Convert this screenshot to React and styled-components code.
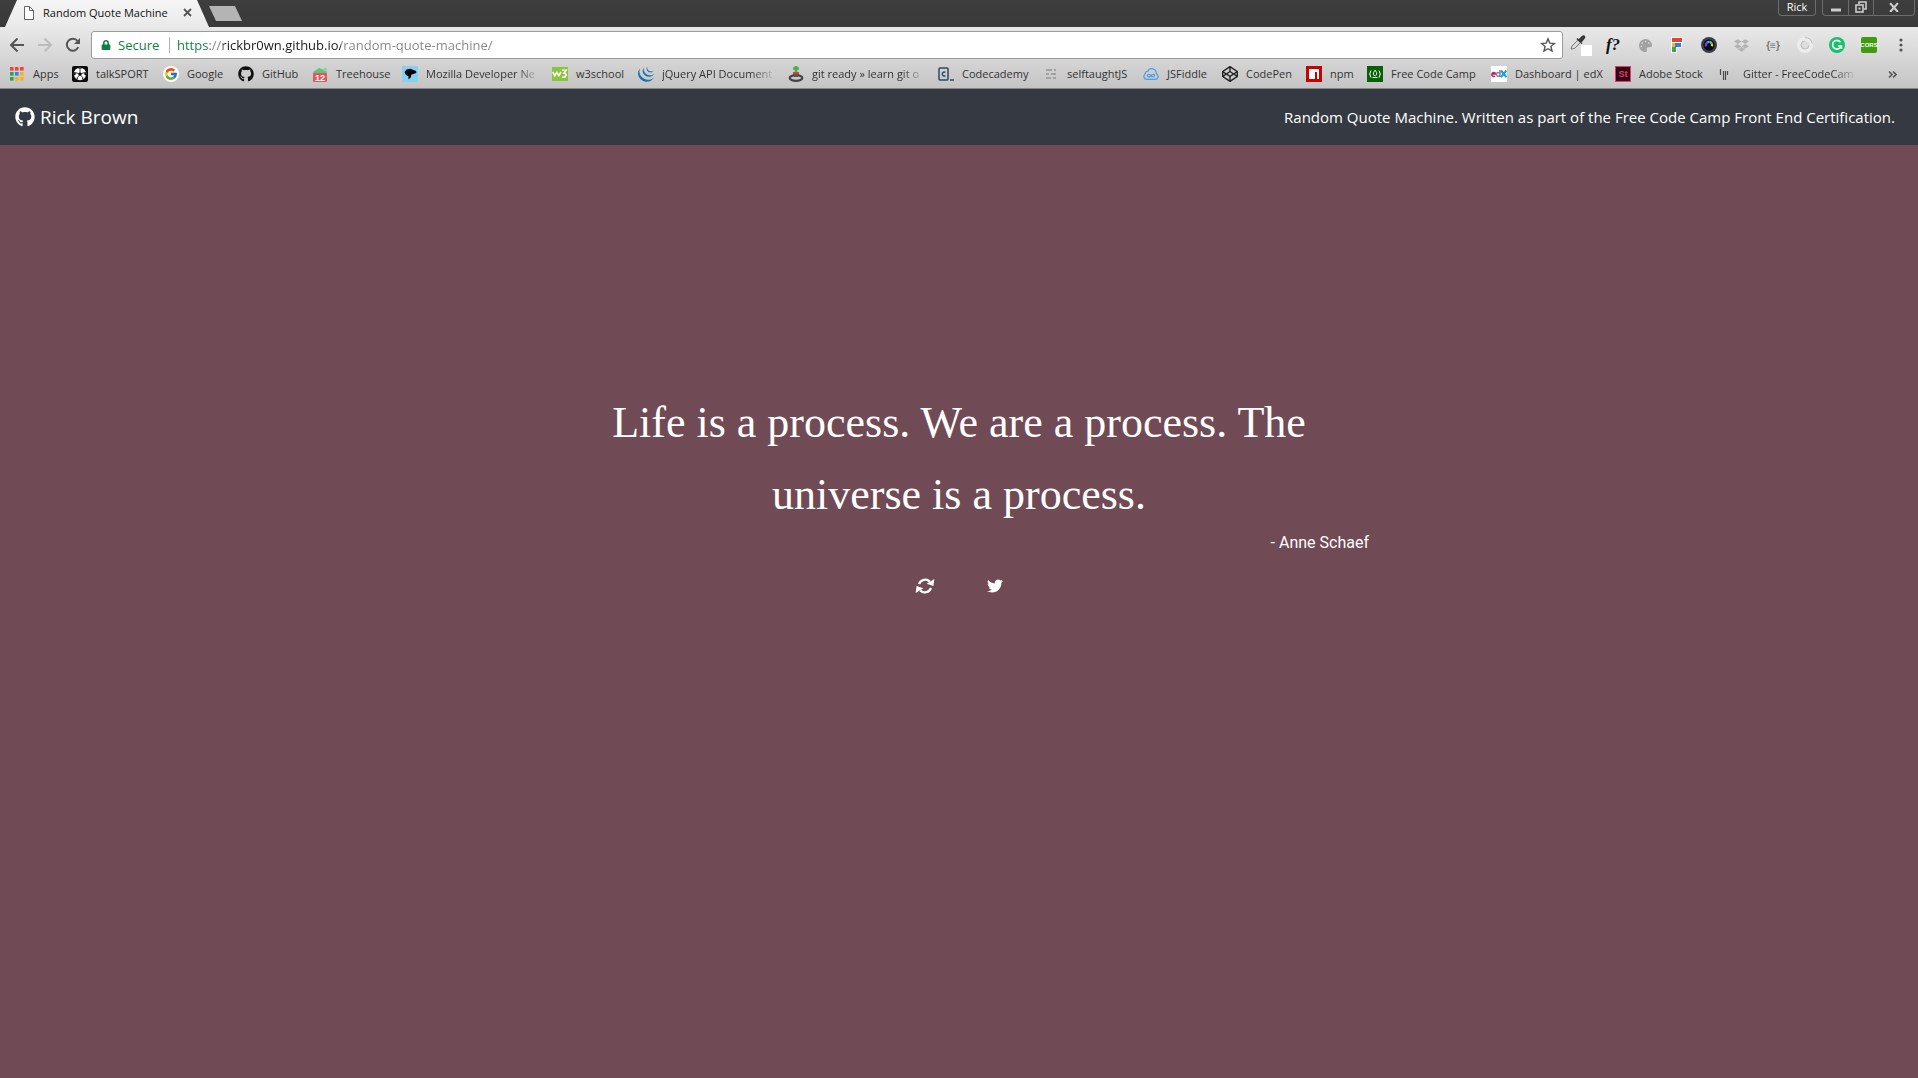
import React from "react";
import styled, { createGlobalStyle } from "styled-components";
import { FaGithub, FaTwitter, FaDropbox, FaCodepen, FaLock, FaPalette } from "react-icons/fa";
import { FcGoogle } from "react-icons/fc";
import { SiJquery } from "react-icons/si";

const uiFont = `"Open Sans", "Noto Sans", sans-serif`;

const GlobalStyle = createGlobalStyle`
  * { box-sizing: border-box; }
  body {
    margin: 0;
    background: #704a54;
    font-family: ${uiFont};
  }
  button {
    border: 0;
    padding: 0;
    background: none;
    color: inherit;
    font: inherit;
  }
  a { color: inherit; text-decoration: none; }
  svg { display: block; flex: none; }
`;

/* ---------- window frame ---------- */

const TitleBar = styled.div`
  display: flex;
  align-items: flex-start;
  height: 27px;
  padding: 0 3px 0 5px;
  background: linear-gradient(#3e3e3e, #393939);
`;

const Tab = styled.div`
  display: flex;
  align-items: center;
  width: 204px;
  height: 27px;
  padding: 0 17px 2px 18px;
  background: linear-gradient(#f6f6f6, #e9e9e9);
  clip-path: polygon(12px 0, 192px 0, 204px 100%, 0 100%);
`;

const TabTitle = styled.span`
  flex: 1;
  padding-left: 8px;
  font-size: 11px;
  line-height: 16px;
  color: #111;
  white-space: nowrap;
`;

const TabClose = styled.button`
  display: flex;
`;

const NewTab = styled.button`
  width: 33px;
  height: 15px;
  margin-top: 6px;
  background: #b4b4b4;
  clip-path: polygon(0 0, 26px 0, 33px 100%, 7px 100%);
`;

const Spacer = styled.div`
  flex: 1;
`;

const WindowGroup = styled.div`
  display: flex;
  height: 16px;
  margin-left: 6px;
  border: 1px solid #6c6c6c;
  border-top: 0;
  border-radius: 0 0 4px 4px;
`;

const WindowButton = styled.button`
  display: flex;
  align-items: center;
  justify-content: center;
  width: ${(p) => p.$width}px;
  padding-bottom: 2px;
  color: #fff;
  font-size: 11px;
  line-height: 12px;
  & + & { border-left: 1px solid #6c6c6c; }
`;

/* ---------- toolbar ---------- */

const Chrome = styled.div`
  padding: 1px 0 2px;
  border-bottom: 1px solid #858585;
  background: linear-gradient(#e9e9e9, #c4c4c4);
`;

const Toolbar = styled.div`
  display: flex;
  align-items: center;
  height: 34px;
  padding: 0 1px 0 3px;
`;

const NavButton = styled.button`
  display: flex;
  align-items: center;
  justify-content: center;
  width: 28px;
  height: 28px;
  color: ${(p) => (p.$muted ? "#bcbcbc" : "#555")};
`;

const AddressBar = styled.form`
  display: flex;
  align-items: center;
  flex: 1;
  height: 28px;
  margin: 0 2px 0 4px;
  padding: 0 6px 0 9px;
  border: 1px solid #9c9c9c;
  border-radius: 3px;
  background: #fff;
  font-size: 13px;
`;

const Secure = styled.span`
  display: flex;
  align-items: center;
  gap: 7px;
  width: 69px;
  height: 16px;
  border-right: 1px solid #b0b0b0;
  color: #0b8043;
  line-height: 16px;
`;

/* Scheme, host and path are told apart by colour, as hard stops clipped to the text. */
const AddressInput = styled.input`
  flex: 1;
  height: 20px;
  margin-left: 7px;
  padding: 0;
  border: 0;
  outline: 0;
  font: 13px ${uiFont};
  color: transparent;
  background: linear-gradient(
    90deg,
    #0b8043 0 33px,
    #858585 33px 46px,
    #1a1a1a 46px 164px,
    #858585 164px
  );
  background-clip: text;
  -webkit-background-clip: text;
`;

const StarButton = styled.button`
  display: flex;
`;

const Extension = styled.button`
  display: flex;
  align-items: center;
  justify-content: center;
  width: 32px;
  height: 28px;
  color: ${(p) => p.$color || "#555"};
`;

const FontFinder = styled.span`
  color: #111;
  font: italic bold 17px "Liberation Serif", serif;
`;

const JsonMark = styled.span`
  color: #777;
  font: bold 10px "Liberation Sans", sans-serif;
`;

const Tile = styled.span`
  display: flex;
  flex: none;
  align-items: center;
  justify-content: center;
  width: 16px;
  height: 16px;
  border: ${(p) => p.$border || "0"};
  border-radius: ${(p) => p.$radius || 0}px;
  background: ${(p) => p.$bg};
  color: ${(p) => p.$color || "#fff"};
  font: bold ${(p) => p.$size || 9}px "Liberation Sans", sans-serif;
`;

/* ---------- bookmarks ---------- */

const Bookmarks = styled.nav`
  display: flex;
  align-items: center;
  height: 24px;
  padding: 0 21px 0 9px;
`;

const Bookmark = styled.a`
  display: flex;
  align-items: center;
  gap: 8px;
  flex: none;
  margin-right: 12px;
`;

const BookmarkLabel = styled.span`
  width: ${(p) => p.$width}px;
  font-size: 11px;
  line-height: 16px;
  color: #333;
  white-space: nowrap;
  ${(p) => p.$fade && "mask-image: linear-gradient(90deg, #000 calc(100% - 24px), transparent);"}
`;

/* ---------- page ---------- */

const Header = styled.header`
  display: flex;
  align-items: center;
  justify-content: space-between;
  height: 56px;
  padding: 0 23px 0 15px;
  background: #353a42;
  color: #fff;
`;

const Brand = styled.a`
  display: flex;
  align-items: center;
  gap: 5px;
  font-size: 19px;
  line-height: 28px;
`;

const Tagline = styled.span`
  font-size: 15px;
  line-height: 24px;
`;

const Main = styled.main`
  max-width: 820px;
  margin: 0 auto;
  padding-top: 242px;
  color: #fff;
`;

const Quote = styled.blockquote`
  margin: 0;
  font: 44px "Liberation Serif", serif;
  line-height: 72px;
  text-align: center;
`;

const Author = styled.p`
  margin: 0;
  font: 16px Roboto, sans-serif;
  line-height: 24px;
  text-align: right;
`;

const Actions = styled.div`
  display: flex;
  justify-content: center;
  gap: 52px;
  margin-top: 22px;
`;

const ActionButton = styled.button`
  display: flex;
  align-items: center;
  height: 18px;
`;

/* ---------- drawings ---------- */

const Stroke = ({ d, size = 16, width = 2, color = "currentColor", box = 16 }) => (
  <svg width={size} height={size} viewBox={`0 0 ${box} ${box}`} fill="none" stroke={color} strokeWidth={width}>
    <path d={d} />
  </svg>
);

const Svg = ({ children, w = 16, h = 16, ...rest }) => (
  <svg width={w} height={h} viewBox={`0 0 ${w} ${h}`} {...rest}>
    {children}
  </svg>
);

const PageIcon = () => (
  <Svg w={12} h={16} fill="#fff" stroke="#666">
    <path d="M1.5 1.5h5l4 4v9h-9z" />
    <path d="M6.5 1.5v4h4" fill="none" />
  </Svg>
);

const ReloadIcon = () => (
  <Svg fill="none" stroke="currentColor" strokeWidth="2">
    <path d="M13.3 10.2A6 6 0 1 1 12.6 4" />
    <path d="M15 1v6H9z" fill="currentColor" stroke="none" />
  </Svg>
);

const AppsIcon = () => {
  const colors = ["#f0433a", "#f0433a", "#f0433a", "#2aa356", "#2f86ee", "#fbb40f", "#2aa356", "#fbb40f", "#fbb40f"];
  return (
    <Svg>
      {colors.map((c, i) => (
        <rect key={i} x={1 + (i % 3) * 5} y={1 + Math.floor(i / 3) * 5} width="3.6" height="3.6" fill={c} />
      ))}
    </Svg>
  );
};

const FootballIcon = () => (
  <Svg>
    <rect width="16" height="16" rx="2" fill="#0a0a0a" />
    <circle cx="8" cy="8" r="6.2" fill="#fff" />
    <path d="M8 6l2 1.400-.8 2.400H6.800L6 7.400z" fill="#0a0a0a" />
    <path d="M8 6V3.500M10 7.400l2.400-.8M9.200 9.800l1.500 2M6.800 9.800l-1.500 2M6 7.400l-2.400-.8" stroke="#0a0a0a" strokeWidth=".8" />
    <path d="M6 2.200L8 3.600l2-1.400zM13.900 6l-1.700.6.300 2.400 1.500.4zM2.100 6l1.700.6L3.500 9 2 9.400zM9.600 14l.8-2 1.900-.2zM6.400 14l-.8-2-1.900-.2z" fill="#0a0a0a" />
  </Svg>
);

const GoogleIcon = () => (
  <Tile $bg="#fff" $radius={8}>
    <FcGoogle size={14} />
  </Tile>
);

const GiftIcon = () => (
  <Svg>
    <path d="M1 6l6-4 8 3-1 5-6-3-6 3z" fill="#62c47b" />
    <path d="M10 4l4-3 1 5z" fill="#8bd59c" />
    <rect x="1" y="7" width="14" height="9" rx="1" fill="#e5565b" />
    <text x="8" y="15" textAnchor="middle" fill="#fff" fontSize="9" fontWeight="bold" fontFamily="Liberation Sans, sans-serif">12</text>
  </Svg>
);

const DinoIcon = () => (
  <Svg>
    <rect width="16" height="16" fill="#86d0f2" />
    <path d="M2.500 6l2-2.500 4-.8 3 1.400 2.600.8.200 2-3 1.200-2 .6-.6 3-2.400 1.600.2-3-2.600-1.400z" fill="#050505" />
  </Svg>
);

const W3Icon = () => (
  <Svg>
    <rect width="16" height="14" y="1" fill="#8bc53f" />
    <path d="M.8 6l2 3.600L4.800 6.400l2 3.200L9 6M9.800 4.200h4.400l-2.200 3c3.200 0 2.800 4.800-1.800 3.800" fill="none" stroke="#fff" strokeWidth="1.6" />
  </Svg>
);

const StackIcon = () => (
  <Svg>
    <path d="M8 0v6M5 2.500h6" stroke="#3fb34f" strokeWidth="2.6" />
    <path d="M5 6h6v3H5z" fill="#d9402f" />
    <ellipse cx="8" cy="12" rx="6.300" ry="2.800" fill="none" stroke="#444" strokeWidth="2.200" />
    <path d="M6 8h4v3H6z" fill="#555" />
  </Svg>
);

const CodecademyIcon = () => (
  <Svg fill="none" stroke="#2b4a63">
    <rect x="1" y="2" width="9" height="12" rx="1" strokeWidth="1.500" />
    <path d="M7.400 6.400a2 2 0 1 0 0 3.200M12 14h4" strokeWidth="1.400" />
  </Svg>
);

const LinesIcon = () => (
  <Svg stroke="#a2a2a2" strokeWidth="2">
    <path d="M3 4h6M11 4h2M3 8h3M8 8h5M3 12h5M10 12h3" />
  </Svg>
);

const FiddleIcon = () => (
  <Svg fill="none" stroke="#4c9fe8" strokeWidth="1.200">
    <path d="M4 13.400a3 3 0 0 1-1.600-5.600 2 2 0 0 1 2.400-2.400 4.400 4.400 0 0 1 8.400 2.200 3 3 0 0 1-1 5.800z" />
    <path d="M8 9.700c-1.400-2-3.600-1.500-3.600 0s2.200 2 3.600 0 3.600-1.500 3.600 0-2.200 2-3.600 0z" />
  </Svg>
);

const NpmIcon = () => (
  <Svg>
    <rect width="16" height="16" fill="#cb0000" />
    <path d="M3 3h10v10h-2V6H9v7H3z" fill="#fff" />
  </Svg>
);

const FccIcon = () => (
  <Svg fill="none" stroke="#fff">
    <rect width="16" height="16" fill="#066106" stroke="none" />
    <path d="M4 4.500q-2.600 3.500 0 7M12 4.500q2.600 3.500 0 7M5.500 11.500h5" />
    <path d="M8 4.200q2.600 2.600 1.600 4.600T6.300 8.800Q6 7 8 4.200z" strokeWidth=".9" />
  </Svg>
);

const EdxIcon = () => (
  <Svg>
    <rect width="16" height="16" fill="#fff" />
    <path d="M1 8h3.600A1.900 1.900 0 1 0 4 10" fill="none" stroke="#b72667" strokeWidth="1.600" />
    <path d="M9 4v7M9 8.400a1.800 1.800 0 1 0-.1.600" fill="none" stroke="#7a8a99" strokeWidth="1.500" />
    <path d="M10 4.500l5.400 6.700M15.400 4.500L10 11.200" stroke="#1a9dd9" strokeWidth="2" />
  </Svg>
);

const GitterIcon = () => (
  <Svg stroke="#4a4a4a" strokeWidth="1.200">
    <path d="M1.500 3v6M4.500 5v9M6.500 5v9M8.500 5v4" />
  </Svg>
);

const EyedropperIcon = () => (
  <Svg w={22} h={22}>
    <rect x="11" y="11" width="11" height="11" fill="#fff" />
    <path d="M1 15l1-3 6-6 2.500 2.500-6 6z" fill="#ddd" stroke="#777" />
    <path d="M7 4.500l5 5M9 6l3.500-3.500q2-1 2 1L11 8z" stroke="#333" strokeWidth="1.600" fill="#444" />
  </Svg>
);

const FIcon = () => (
  <Svg>
    <path d="M2 0h12v6h-1v5H8v5H2z" fill="#fff" />
    <path d="M3 1h10v4H3z" fill="#e8402a" />
    <path d="M5 6h7v4H5z" fill="#2f7fe0" />
    <path d="M3 6h3v4H3z" fill="#f5b821" />
    <path d="M3 10h4v5H3z" fill="#35a853" />
  </Svg>
);

const LensIcon = () => (
  <Svg>
    <circle cx="8" cy="8" r="8" fill="#3c3f4a" />
    <circle cx="8" cy="8" r="5.500" fill="#0b0b10" />
    <g fill="none" strokeWidth="2.200">
      <path d="M5.200 9.500a3.200 3.200 0 0 1 1-4" stroke="#7a3be8" />
      <path d="M6.200 5.500a3.200 3.200 0 0 1 2.400-.6" stroke="#27b8e8" />
      <path d="M8.600 4.900a3.200 3.200 0 0 1 2.200 1.700" stroke="#3ce05a" />
      <path d="M10.800 6.600a3.200 3.200 0 0 1 0 2.600" stroke="#f2d12d" />
    </g>
  </Svg>
);

const RingIcon = () => (
  <Svg fill="none">
    <circle cx="8" cy="8" r="6" stroke="#ececec" strokeWidth="4" />
    <path d="M8 4a4 4 0 1 0 4 4" stroke="#bcbcbc" />
    <path d="M8 .6a7.400 7.400 0 0 1 7.200 6" stroke="#bcbcbc" />
  </Svg>
);

const GrammarlyIcon = () => (
  <Svg fill="none" stroke="#fff" strokeWidth="1.700">
    <circle cx="8" cy="8" r="8" fill="#15c26b" stroke="none" />
    <path d="M11.600 5.200A4.400 4.400 0 1 0 12.200 9M9 9h3.400v3" />
  </Svg>
);

const DotsIcon = () => (
  <Svg fill="#555">
    <circle cx="8" cy="3" r="1.600" />
    <circle cx="8" cy="8" r="1.600" />
    <circle cx="8" cy="13" r="1.600" />
  </Svg>
);

const RestoreIcon = () => (
  <Svg w={12} h={12} fill="none" stroke="#ccc" strokeWidth="1.600">
    <path d="M4 3V1h7v7H9" />
    <rect x="1" y="4" width="7" height="7" />
    <rect x="4" y="7" width="1" height="1" strokeWidth="1" />
  </Svg>
);

const RefreshIcon = () => (
  <Svg w={20} h={16} fill="none" stroke="currentColor" strokeWidth="2.200">
    <path d="M4 6A6.600 6.600 0 0 1 14.800 3.600M16 10A6.600 6.600 0 0 1 5.200 12.400" />
    <path d="M19.400 1l-1 7-6.800-2.200zM.6 15l1-7 6.800 2.200z" fill="currentColor" stroke="none" />
  </Svg>
);

/* ---------- data ---------- */

const bookmarks = [
  { label: "Apps", width: 27, icon: <AppsIcon /> },
  { label: "talkSPORT", width: 55, icon: <FootballIcon /> },
  { label: "Google", width: 39, icon: <GoogleIcon /> },
  { label: "GitHub", width: 38, icon: <FaGithub size={16} color="#111" /> },
  { label: "Treehouse", width: 54, icon: <GiftIcon /> },
  { label: "Mozilla Developer Ne", width: 114, fade: true, icon: <DinoIcon /> },
  { label: "w3school", width: 50, icon: <W3Icon /> },
  { label: "jQuery API Document", width: 114, fade: true, icon: <SiJquery size={16} color="#1b6fae" /> },
  { label: "git ready » learn git o", width: 114, fade: true, icon: <StackIcon /> },
  { label: "Codecademy", width: 69, icon: <CodecademyIcon /> },
  { label: "selftaughtJS", width: 64, icon: <LinesIcon /> },
  { label: "JSFiddle", width: 43, icon: <FiddleIcon /> },
  { label: "CodePen", width: 48, icon: <FaCodepen size={16} color="#222" /> },
  { label: "npm", width: 25, icon: <NpmIcon /> },
  { label: "Free Code Camp", width: 88, icon: <FccIcon /> },
  { label: "Dashboard | edX", width: 88, icon: <EdxIcon /> },
  { label: "Adobe Stock", width: 68, icon: <Tile $bg="#2b0a14" $border="1px solid #f0346a" $color="#f0346a">St</Tile> },
  { label: "Gitter - FreeCodeCam", width: 114, fade: true, icon: <GitterIcon /> },
];

const extensions = [
  { name: "Colour picker", icon: <EyedropperIcon /> },
  { name: "Font finder", icon: <FontFinder>f?</FontFinder> },
  { name: "Palette", color: "#a2a2a2", icon: <FaPalette size={13} /> },
  { name: "Flags", icon: <FIcon /> },
  { name: "Lens", icon: <LensIcon /> },
  { name: "Dropbox", color: "#b4b4b4", icon: <FaDropbox size={15} /> },
  { name: "JSON viewer", icon: <JsonMark>{"{≡}"}</JsonMark> },
  { name: "Ring", icon: <RingIcon /> },
  { name: "Grammarly", icon: <GrammarlyIcon /> },
  { name: "CORS", icon: <Tile $bg="#3f9c10" $radius={2} $size={6}>CORS</Tile> },
  { name: "Menu", icon: <DotsIcon /> },
];

export default function App() {
  return (
    <>
      <GlobalStyle />
      <TitleBar>
        <Tab>
          <PageIcon />
          <TabTitle>Random Quote Machine</TabTitle>
          <TabClose aria-label="Close tab">
            <Stroke d="M1 1l7 7M8 1l-7 7" size={9} box={9} width={1.8} color="#555" />
          </TabClose>
        </Tab>
        <NewTab aria-label="New tab" />
        <Spacer />
        <WindowGroup>
          <WindowButton $width={36}>Rick</WindowButton>
        </WindowGroup>
        <WindowGroup>
          <WindowButton $width={25} aria-label="Minimise">
            <Stroke d="M1 9h10" size={12} box={12} width={3} color="#ccc" />
          </WindowButton>
          <WindowButton $width={25} aria-label="Restore">
            <RestoreIcon />
          </WindowButton>
          <WindowButton $width={41} aria-label="Close">
            <Stroke d="M1 1l7 8M8 1l-7 8" size={10} box={9} width={2} color="#ccc" />
          </WindowButton>
        </WindowGroup>
      </TitleBar>

      <Chrome>
        <Toolbar>
          <NavButton aria-label="Back">
            <Stroke d="M15 8H2M8.500 1.500L2 8l6.500 6.500" />
          </NavButton>
          <NavButton aria-label="Forward" $muted>
            <Stroke d="M1 8h13M7.500 1.500L14 8l-6.500 6.500" />
          </NavButton>
          <NavButton aria-label="Reload">
            <ReloadIcon />
          </NavButton>
          <AddressBar onSubmit={(e) => e.preventDefault()}>
            <Secure>
              <FaLock size={10} />
              Secure
            </Secure>
            <AddressInput aria-label="Address" defaultValue="https://rickbr0wn.github.io/random-quote-machine/" />
            <StarButton type="button" aria-label="Bookmark this page">
              <Stroke d="M8 1.800l1.800 4.300 4.600.4-3.500 3 1.100 4.600L8 11.700l-4 2.400 1.100-4.600-3.500-3 4.600-.4z" width={1.4} color="#555" />
            </StarButton>
          </AddressBar>
          {extensions.map((x) => (
            <Extension key={x.name} aria-label={x.name} $color={x.color}>
              {x.icon}
            </Extension>
          ))}
        </Toolbar>
        <Bookmarks>
          {bookmarks.map((b) => (
            <Bookmark key={b.label} href="#">
              {b.icon}
              <BookmarkLabel $width={b.width} $fade={b.fade}>
                {b.label}
              </BookmarkLabel>
            </Bookmark>
          ))}
          <Spacer />
          <TabClose aria-label="More bookmarks">
            <Stroke d="M1 1.500l3 3-3 3M5 1.500l3 3-3 3" size={9} box={9} width={1.6} color="#555" />
          </TabClose>
        </Bookmarks>
      </Chrome>

      <Header>
        <Brand href="#">
          <FaGithub size={20} />
          Rick Brown
        </Brand>
        <Tagline>Random Quote Machine. Written as part of the Free Code Camp Front End Certification.</Tagline>
      </Header>

      <Main>
        <Quote>Life is a process. We are a process. The universe is a process.</Quote>
        <Author>- Anne Schaef</Author>
        <Actions>
          <ActionButton aria-label="New quote">
            <RefreshIcon />
          </ActionButton>
          <ActionButton aria-label="Tweet quote">
            <FaTwitter size={16} />
          </ActionButton>
        </Actions>
      </Main>
    </>
  );
}
